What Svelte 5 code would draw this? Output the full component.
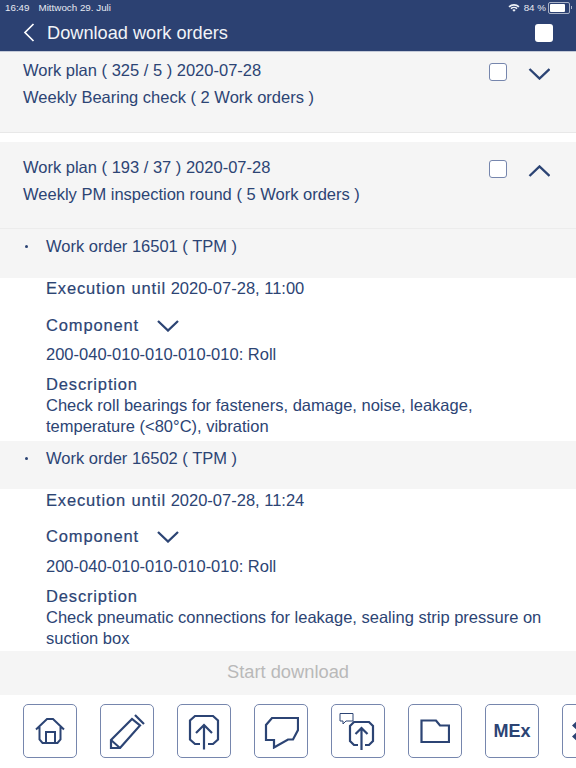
<script>
  const orders = [
    { id: 16501, until: '2020-07-28, 11:00', desc: 'Check roll bearings for fasteners, damage, noise, leakage, temperature (<80°C), vibration' },
    { id: 16502, until: '2020-07-28, 11:24', desc: 'Check pneumatic connections for leakage, sealing strip pressure on suction box' }
  ];
</script>

<div class="page">
  <header class="head">
    <div class="status">
      <span class="time">16:49</span><span class="date">Mittwoch 29. Juli</span>
      <span class="spacer"></span>
      <svg class="wifi" width="12" height="9" viewBox="0 0 12 9"><path d="M0.5 3.200a8 8 0 0 1 11 0L10.400 4.400a6.400 6.400 0 0 0-8.800 0zM2.400 5.100a5.200 5.200 0 0 1 7.200 0L8.500 6.200a3.600 3.600 0 0 0-5 0zM4.300 7a2.400 2.400 0 0 1 3.400 0L6 8.800z" fill="#eef1f7"/></svg>
      <span class="pct">84 %</span>
      <span class="battery"><span class="level"></span></span>
      <span class="nub"></span>
    </div>
    <div class="title">
      <svg class="back" width="12" height="20" viewBox="0 0 12 20"><path d="M10.500 1 2 9.500l8.500 8.500" fill="none" stroke="#fff" stroke-width="1.700"/></svg>
      <h1>Download work orders</h1>
      <span class="spacer"></span>
      <span class="solid"></span>
    </div>
  </header>

  <section class="plan first">
    <div class="plan-main">
      <div class="t">Work plan ( 325 / 5 ) 2020-07-28</div>
      <div class="t">Weekly Bearing check ( 2 Work orders )</div>
    </div>
    <span class="check"></span>
    <svg class="chev" width="22" height="12" viewBox="0 0 22 12"><path d="M1.500 1 11.500 10.500 21.500 1" fill="none" stroke="#2c4474" stroke-width="2.400"/></svg>
  </section>

  <div class="sep"></div>

  <section class="plan second">
    <div class="plan-main">
      <div class="t">Work plan ( 193 / 37 ) 2020-07-28</div>
      <div class="t">Weekly PM inspection round ( 5 Work orders )</div>
    </div>
    <span class="check"></span>
    <svg class="chev" width="22" height="12" viewBox="0 0 22 12"><path d="M1.500 11 11.500 1.500 21.500 11" fill="none" stroke="#2c4474" stroke-width="2.400"/></svg>
  </section>

  {#each orders as o, i}
    <div class="order" class:tall={i === 0}>
      <span class="dot"></span>
      <span class="t">Work order {o.id} ( TPM )</span>
    </div>
    <div class="detail" class:lead={i === 0}>
      <div class="line exec"><span class="lbl">Execution until</span> {o.until}</div>
      <div class="line comp">
        <span class="lbl">Component</span>
        <svg width="22" height="12" viewBox="0 0 22 12"><path d="M1 1 11 10.500 21 1" fill="none" stroke="#2c4474" stroke-width="2.300"/></svg>
      </div>
      <div class="line code">200-040-010-010-010-010: Roll</div>
      <div class="lbl dtitle">Description</div>
      <div class="desc">{o.desc}</div>
    </div>
  {/each}

  <div class="start">Start download</div>

  <nav class="tools">
    <button aria-label="Home">
      <svg width="30" height="28" viewBox="0 0 30 28" fill="none" stroke="#2c4474" stroke-width="2"><path d="M1 12.500 12 2h6l11 10.500M4.500 10v12.500l3 3.500h15l3-3.500V10"/><path d="M11 26V15h9v11"/></svg>
    </button>
    <button aria-label="Edit">
      <svg width="36" height="36" viewBox="0 0 36 36" fill="none" stroke="#2c4474" stroke-width="2.200"><path d="M2 27 23 6l8 6.500L11 35H2z"/><path d="M2 27l9 8" stroke-width="2"/><path d="M26 2l9 9"/></svg>
    </button>
    <button aria-label="Upload">
      <svg width="32" height="38" viewBox="0 0 32 38" fill="none" stroke="#2c4474" stroke-width="2.200"><path d="M12 32H7l-5-4.500V8.500L7 4h18l5 4.500v19L25 32h-5"/><path d="M16 37.500V13M8 21l8-8 8 8"/></svg>
    </button>
    <button aria-label="Comment">
      <svg width="36" height="36" viewBox="0 0 36 36" fill="none" stroke="#2c4474" stroke-width="2.200"><path d="M9 5H35V17L30 26.500H25L11 34.500V27H3V12z"/></svg>
    </button>
    <button aria-label="Comment upload">
      <svg width="44" height="42" viewBox="0 0 44 42" fill="none" stroke="#2c4474"><path d="M4 3.500h13v7.500H10l-3 3v-3H4z" stroke-width="1"/><path stroke-width="2.200" d="M22 35h-4l-4-4V16l4-4h15l4 4v15l-4 4h-4"/><path stroke-width="2.200" d="M25.500 40V18M19.500 24l6-6 6 6"/></svg>
    </button>
    <button aria-label="Folder">
      <svg width="30" height="24" viewBox="0 0 30 24" fill="none" stroke="#2c4474" stroke-width="2.200"><path d="M1.500 1.500H16l4 5H29V23H1.500z"/></svg>
    </button>
    <button class="mex">MEx</button>
    <button aria-label="More">
      <svg class="more" width="12" height="22" viewBox="0 0 12 22" fill="#2c4474"><path d="M6 0l6 5.500-6 5.500-6-5.500zM6 11l6 5.500-6 5.500-6-5.500z"/></svg>
    </button>
  </nav>
</div>

<style>
  :global(body) { margin: 0; background: #fff; }
  .page { width: 576px; height: 768px; overflow: hidden; font-family: "Liberation Sans", Arial, sans-serif; color: #2c4474; font-size: 16.500px; }
  .head { background: #2c4172; color: #fff; height: 51px; border-bottom: 1px solid #c4cad8; }
  .status { display: flex; align-items: center; height: 15px; padding: 0 5px; font-size: 9.800px; color: #e6e9f1; }
  .date { margin-left: 9px; }
  .spacer { flex: 1; }
  .wifi { margin-right: 4px; }
  .pct { margin-right: 2px; }
  .battery { width: 18px; height: 8px; border: 1px solid #aab3c8; border-radius: 2px; padding: 1px; display: flex; }
  .level { width: 84%; background: #fff; border-radius: 1px; }
  .nub { width: 1px; height: 3px; background: #aab3c8; margin-left: 1px; margin-right: -1px; }
  .title { display: flex; align-items: center; height: 36px; padding: 0 23px; }
  .title h1 { margin: 0 0 0 12px; font-weight: 400; font-size: 18.200px; color: #f2f4f8; }
  .solid { width: 18px; height: 18px; background: #fff; border-radius: 3px; }

  .plan { display: flex; align-items: flex-start; background: #f5f5f5; padding-left: 23px; padding-right: 26px; }
  .first { height: 80px; border-bottom: 1px solid #e8e8e8; }
  .second { height: 86px; border-bottom: 1px solid #ececec; }
  .sep { height: 9px; background: #fff; }
  .plan-main { flex: 1; }
  .t { line-height: 27px; }
  .first .plan-main { padding-top: 5px; }
  .second .plan-main { padding-top: 12px; }
  .check { box-sizing: border-box; width: 18px; height: 18px; border: 1.500px solid #7686ad; border-radius: 3px; background: #fff; margin-right: 21px; }
  .first .check { margin-top: 11px; }
  .second .check { margin-top: 18px; }
  .first .chev { margin-top: 16px; }
  .second .chev { margin-top: 23px; }

  .order { display: flex; align-items: flex-start; background: #f5f5f5; height: 48px; padding-left: 25px; box-sizing: border-box; }
  .order.tall { height: 49px; }
  .order .t { line-height: 34px; }
  .dot { width: 3px; height: 3px; border-radius: 50%; background: #2c4474; margin-top: 16px; margin-right: 18px; }

  .detail { padding: 1px 20px 2px 46px; }
  .detail.lead { padding: 0 20px 4px 46px; }
  .line { line-height: 20px; }
  .lbl { letter-spacing: 0.850px; -webkit-text-stroke: 0.2px #2c4474; }
  .comp { display: flex; align-items: center; gap: 18px; margin-top: 16px; }
  .lead .comp { margin-top: 17px; }
  .comp svg { margin-top: 1px; }
  .code { margin-top: 10px; }
  .lead .code { margin-top: 9px; }
  .dtitle { display: block; margin-top: 10px; line-height: 21px; }
  .desc { line-height: 21px; }

  .start { height: 44px; line-height: 42px; background: #f5f5f5; color: #b9b9b9; text-align: center; font-size: 18.300px; }

  .tools { display: flex; gap: 23px; padding: 9px 0 0 23px; width: 640px; }
  .tools button { flex: none; box-sizing: border-box; width: 54px; height: 54px; padding: 0; background: #fff; border: 1px solid #7686ad; border-radius: 5px; display: flex; align-items: center; justify-content: center; color: #2c4474; font: 700 18px "Liberation Sans", Arial, sans-serif; }
  .more { position: relative; left: -11px; }
</style>
